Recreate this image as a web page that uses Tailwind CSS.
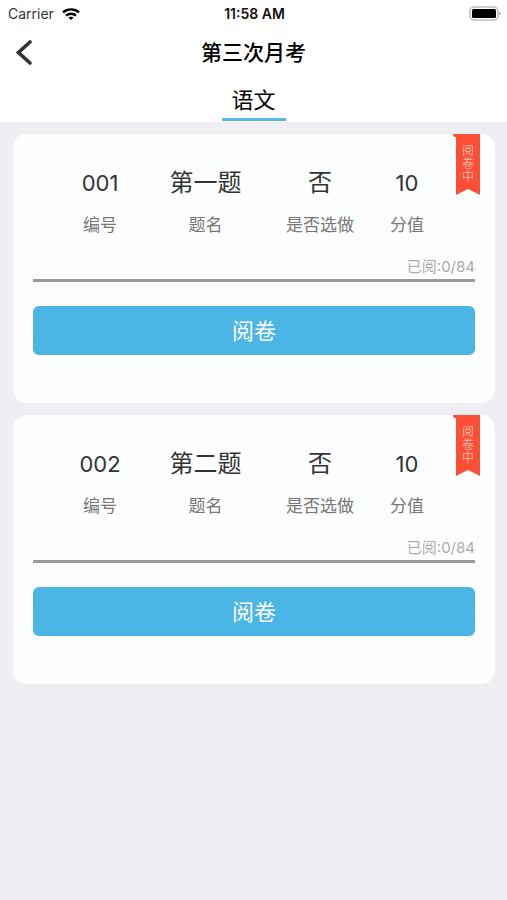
<!DOCTYPE html>
<html lang="zh-CN">
<head>
<meta charset="utf-8">
<meta name="viewport" content="width=device-width, initial-scale=1">
<title>第三次月考</title>
<script src="https://cdn.jsdelivr.net/npm/@tailwindcss/browser@4"></script>
</head>
<body class="min-h-screen bg-[#efeef3] font-['Inter','Noto_Sans_CJK_SC',sans-serif] text-[#333333]">
<header class="bg-white text-black">
  <div class="grid h-7 grid-cols-3 items-center pr-1.5 pl-2">
    <div class="flex items-center gap-2 text-sm text-[#333333]">
      <span>Carrier</span>
      <svg class="h-3 w-[18px]" viewBox="0 0 18 12" fill="none" stroke="#000" stroke-width="2.4" aria-label="Wi-Fi">
        <path d="M1 4.4C5.5.4 12.5.4 17 4.4"/>
        <path d="M4 7.6C6.8 5.1 11.2 5.1 14 7.6"/>
        <path d="M6.3 9.6C7.8 8.3 10.2 8.3 11.7 9.6L9 12z" fill="#000" stroke="none"/>
      </svg>
    </div>
    <time class="text-center text-sm font-semibold whitespace-nowrap text-[#111111]">11:58 AM</time>
    <svg class="h-4 w-8 justify-self-end" viewBox="0 0 32 16" aria-label="电量">
      <rect x="1" y="1" width="28" height="13" rx="4" fill="#fff" stroke="#bdbdbd" stroke-width="1.5"/>
      <rect x="3" y="3" width="24" height="9" rx="1.5" fill="#000"/>
      <path d="M30.3 5.5v4q1.4-.8 1.4-2t-1.4-2z" fill="#999"/>
    </svg>
  </div>
  <div class="grid h-[50px] grid-cols-[48px_1fr_48px] items-center">
    <button type="button" aria-label="返回" class="flex h-12 items-center pl-4">
      <svg class="h-7 w-4" viewBox="0 0 16 28" fill="none" stroke="#333" stroke-width="3.6" stroke-linecap="round"><path d="M14 3 2.5 13.5 14 24"/></svg>
    </button>
    <h1 class="text-center text-[21px] leading-7 font-medium">第三次月考</h1>
  </div>
  <nav class="flex justify-center pb-px">
    <a href="#yuwen" aria-current="page" class="flex h-[43px] w-16 items-center justify-center border-b-3 border-[#5ab7e0] pt-1 text-[22px] leading-8">语文</a>
  </nav>
</header>
<main id="yuwen" class="flex flex-col gap-3 px-3 pt-3 pl-[13px]">
  <article class="relative rounded-[14px] bg-[#fdfeff] px-5 pt-[33px] pb-12">
    <dl class="grid grid-cols-[106fr_105fr_124fr_50fr] pr-[43px] pl-[14px] text-center whitespace-nowrap">
      <div class="flex flex-col-reverse items-center gap-3"><dt class="text-[17px] leading-7 text-[#777777]">编号</dt><dd class="text-[22px] leading-8">001</dd></div>
      <div class="flex flex-col-reverse items-center gap-3"><dt class="text-[17px] leading-7 text-[#777777]">题名</dt><dd class="text-[24px] leading-8">第一题</dd></div>
      <div class="flex flex-col-reverse items-center gap-3"><dt class="text-[17px] leading-7 text-[#777777]">是否选做</dt><dd class="text-[24px] leading-8">否</dd></div>
      <div class="flex flex-col-reverse items-center gap-3"><dt class="text-[17px] leading-7 text-[#777777]">分值</dt><dd class="text-[22px] leading-8">10</dd></div>
    </dl>
    <p class="mt-[18px] border-b-3 border-[#999999] pb-0.5 text-right text-[15px] leading-5 text-[#aaaaaa]">已阅:0/84</p>
    <button type="button" class="mt-6 h-[49px] w-full rounded-md bg-[#4bb6e6] text-[22px] leading-8 text-white">阅卷</button>
    <div class="absolute top-0 right-[15px] h-[61px] w-[27px]">
      <svg class="absolute inset-0 h-full w-full" viewBox="0 0 27 61" aria-hidden="true"><path d="M0 0H27V61L15 55 3 61V3H2Q0 3 0 0z" fill="#fd4e36"/></svg>
      <span class="absolute top-[10px] left-[9px] w-3 text-xs leading-[13px] font-light break-all text-[#ffe3dd]">阅卷中</span>
    </div>
  </article>
  <article class="relative rounded-[14px] bg-[#fdfeff] px-5 pt-[33px] pb-12">
    <dl class="grid grid-cols-[106fr_105fr_124fr_50fr] pr-[43px] pl-[14px] text-center whitespace-nowrap">
      <div class="flex flex-col-reverse items-center gap-3"><dt class="text-[17px] leading-7 text-[#777777]">编号</dt><dd class="text-[22px] leading-8">002</dd></div>
      <div class="flex flex-col-reverse items-center gap-3"><dt class="text-[17px] leading-7 text-[#777777]">题名</dt><dd class="text-[24px] leading-8">第二题</dd></div>
      <div class="flex flex-col-reverse items-center gap-3"><dt class="text-[17px] leading-7 text-[#777777]">是否选做</dt><dd class="text-[24px] leading-8">否</dd></div>
      <div class="flex flex-col-reverse items-center gap-3"><dt class="text-[17px] leading-7 text-[#777777]">分值</dt><dd class="text-[22px] leading-8">10</dd></div>
    </dl>
    <p class="mt-[18px] border-b-3 border-[#999999] pb-0.5 text-right text-[15px] leading-5 text-[#aaaaaa]">已阅:0/84</p>
    <button type="button" class="mt-6 h-[49px] w-full rounded-md bg-[#4bb6e6] text-[22px] leading-8 text-white">阅卷</button>
    <div class="absolute top-0 right-[15px] h-[61px] w-[27px]">
      <svg class="absolute inset-0 h-full w-full" viewBox="0 0 27 61" aria-hidden="true"><path d="M0 0H27V61L15 55 3 61V3H2Q0 3 0 0z" fill="#fd4e36"/></svg>
      <span class="absolute top-[10px] left-[9px] w-3 text-xs leading-[13px] font-light break-all text-[#ffe3dd]">阅卷中</span>
    </div>
  </article>
</main>
</body>
</html>
